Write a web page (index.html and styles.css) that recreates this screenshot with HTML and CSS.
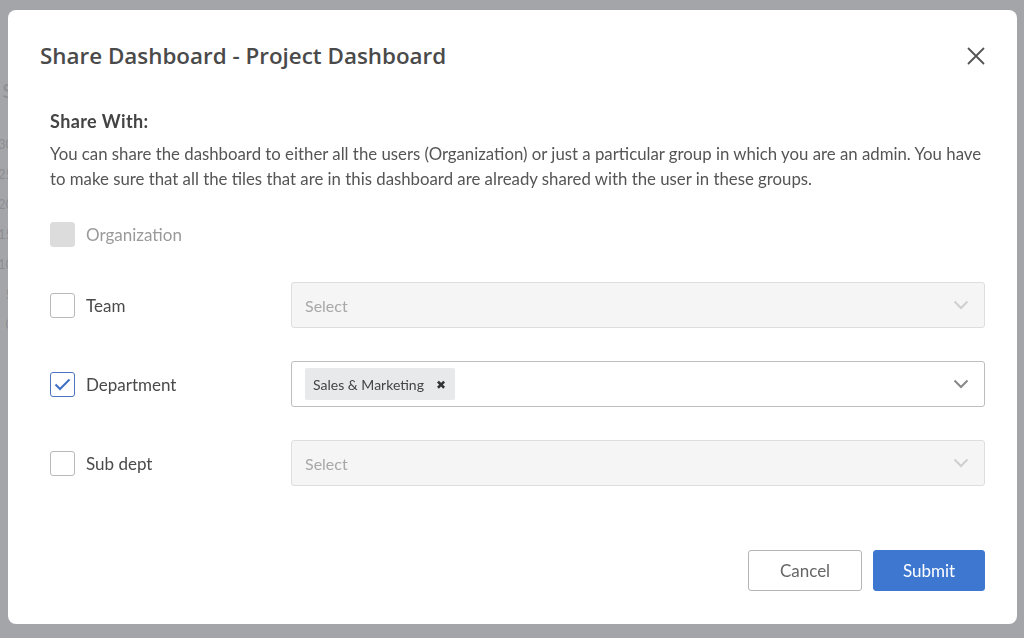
FILE: index.html
```html
<!DOCTYPE html>
<html lang="en">
<head>
  <meta charset="UTF-8">
  <title>Share Dashboard</title>
  <link rel="stylesheet" href="styles.css">
</head>
<body>
  <div class="backdrop">
    <div class="axis">
      <span class="axis-title">S</span>
      <span>30</span>
      <span>25</span>
      <span>20</span>
      <span>15</span>
      <span>10</span>
      <span>5</span>
      <span>0</span>
    </div>
  </div>

  <div class="modal">
    <div class="modal-header">
      <h2 class="modal-title">Share Dashboard - Project Dashboard</h2>
      <button class="close-btn" aria-label="Close">
        <svg width="18" height="18" viewBox="0 0 18 18"><path d="M1.5 1.5 L16.5 16.5 M16.5 1.5 L1.5 16.5" stroke="#555" stroke-width="1.8" fill="none" stroke-linecap="round"/></svg>
      </button>
    </div>

    <div class="modal-body">
      <h3 class="section-title">Share With:</h3>
      <p class="section-text">You can share the dashboard to either all the users (Organization) or just a particular group in which you are an admin. You have to make sure that all the tiles that are in this dashboard are already shared with the user in these groups.</p>

      <div class="org-row">
        <span class="checkbox disabled"></span>
        <span class="label muted">Organization</span>
      </div>

      <div class="share-row">
        <div class="check-label">
          <span class="checkbox"></span>
          <span class="label">Team</span>
        </div>
        <div class="select disabled">
          <span class="placeholder">Select</span>
          <svg class="chevron" width="16" height="10" viewBox="0 0 16 10"><path d="M1.5 1.5 L8 8 L14.5 1.5" stroke="#cfcfcf" stroke-width="2" fill="none"/></svg>
        </div>
      </div>

      <div class="share-row">
        <div class="check-label">
          <span class="checkbox checked">
            <svg width="17" height="13" viewBox="0 0 17 13"><path d="M1.5 6.5 L6 11 L15.5 1.5" stroke="#3f6fc4" stroke-width="2" fill="none"/></svg>
          </span>
          <span class="label">Department</span>
        </div>
        <div class="select">
          <span class="tag">Sales &amp; Marketing <span class="tag-x">&#x2716;</span></span>
          <svg class="chevron" width="16" height="10" viewBox="0 0 16 10"><path d="M1.5 1.5 L8 8 L14.5 1.5" stroke="#888" stroke-width="2" fill="none"/></svg>
        </div>
      </div>

      <div class="share-row">
        <div class="check-label">
          <span class="checkbox"></span>
          <span class="label">Sub dept</span>
        </div>
        <div class="select disabled">
          <span class="placeholder">Select</span>
          <svg class="chevron" width="16" height="10" viewBox="0 0 16 10"><path d="M1.5 1.5 L8 8 L14.5 1.5" stroke="#cfcfcf" stroke-width="2" fill="none"/></svg>
        </div>
      </div>
    </div>

    <div class="modal-footer">
      <button class="btn btn-cancel">Cancel</button>
      <button class="btn btn-submit">Submit</button>
    </div>
  </div>
</body>
</html>
```

FILE: styles.css
```css
body {
  margin: 0;
  height: 100vh;
  background: #a4a5a9;
  font-family: Lato, 'Noto Sans', sans-serif;
  overflow: hidden;
}
.backdrop {
  padding-top: 78px;
}
.axis {
  display: flex;
  flex-direction: column;
  align-items: flex-end;
  width: 13px;
  gap: 14px;
  font-size: 13px;
  line-height: 16px;
  color: #8d8e92;
}
.axis-title {
  font-size: 20px;
  line-height: 24px;
  margin-bottom: 20px;
}

.modal {
  position: fixed;
  left: 8px;
  top: 10px;
  width: 1009px;
  height: 614px;
  background: #fff;
  border-radius: 8px;
  display: flex;
  flex-direction: column;
  box-sizing: border-box;
}
.modal-header {
  display: flex;
  align-items: center;
  justify-content: space-between;
  padding: 31px 31px 0 32px;
}
.modal-title {
  margin: 0;
  font-family: 'Open Sans', sans-serif;
  font-size: 22.4px;
  font-weight: 600;
  line-height: 30px;
  color: #4a4a4a;
}
.close-btn {
  border: none;
  background: none;
  padding: 0;
  width: 20px;
  height: 20px;
  display: flex;
  align-items: center;
  justify-content: center;
  cursor: pointer;
}

.modal-body {
  padding: 0 32px 0 42px;
  margin-top: 38px;
}
.section-title {
  margin: 0;
  font-size: 18px;
  font-weight: 700;
  letter-spacing: 0.4px;
  line-height: 24px;
  color: #444;
}
.section-text {
  margin: 8px 0 0;
  font-size: 16.8px;
  line-height: 25px;
  color: #555;
}

.checkbox {
  width: 23px;
  height: 23px;
  border: 1px solid #b9b9b9;
  border-radius: 3px;
  background: #fff;
  display: flex;
  align-items: center;
  justify-content: center;
  flex-shrink: 0;
}
.checkbox.disabled {
  background: #dcdcdc;
  border-color: #dcdcdc;
}
.checkbox.checked {
  border-color: #4a74c0;
}
.label {
  font-size: 17px;
  color: #4a4a4a;
  margin-left: 11px;
}
.label.muted {
  color: #9a9a9a;
}

.org-row {
  display: flex;
  align-items: center;
  margin-top: 31px;
}
.share-row {
  display: grid;
  grid-template-columns: 241px 1fr;
  align-items: center;
  margin-top: 33px;
}
.org-row + .share-row {
  margin-top: 35px;
}
.check-label {
  display: flex;
  align-items: center;
}
.select {
  height: 46px;
  box-sizing: border-box;
  border: 1px solid #bdbdbd;
  border-radius: 3px;
  background: #fff;
  display: flex;
  align-items: center;
  padding: 0 15px 0 13px;
}
.select.disabled {
  background: #f5f5f5;
  border-color: #dedede;
}
.placeholder {
  font-size: 16px;
  color: #a8a8a8;
}
.chevron {
  margin-left: auto;
}
.tag {
  display: flex;
  align-items: center;
  height: 32px;
  padding: 0 9px 0 8px;
  background: #e8e9eb;
  border-radius: 2px;
  font-size: 14px;
  color: #444;
}
.tag-x {
  font-size: 12px;
  margin-left: 12px;
  color: #333;
}

.modal-footer {
  margin-top: auto;
  display: flex;
  justify-content: flex-end;
  gap: 11px;
  padding: 0 32px 33px 0;
}
.btn {
  height: 41px;
  border-radius: 3px;
  font-family: Lato, 'Noto Sans', sans-serif;
  font-size: 17px;
  cursor: pointer;
}
.btn-cancel {
  width: 114px;
  background: #fff;
  border: 1px solid #b5b5b5;
  color: #666;
}
.btn-submit {
  width: 112px;
  background: #3e77d0;
  border: 1px solid #3e77d0;
  color: #fff;
}
```
